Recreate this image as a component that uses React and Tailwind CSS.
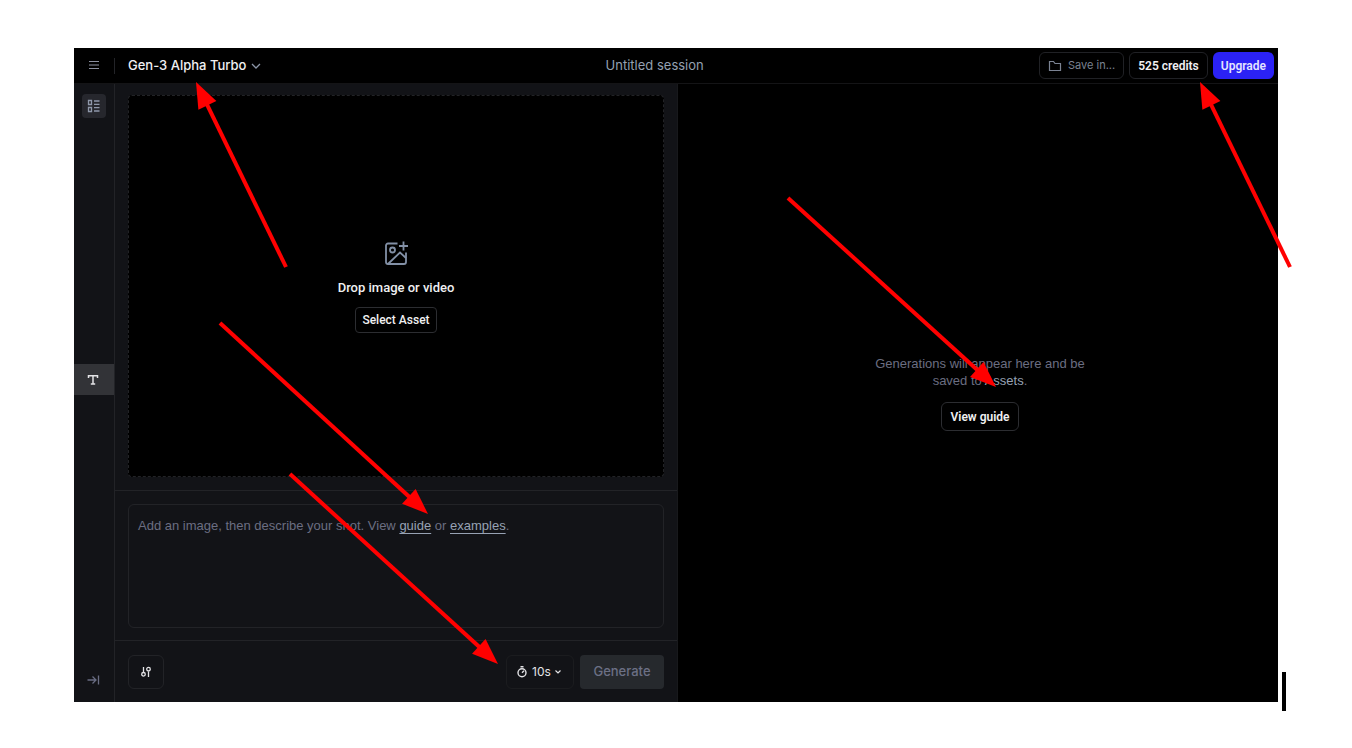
import { useState } from "react";

const arrows = [
  { from: [286, 267], to: [196, 82] },
  { from: [1290, 267], to: [1200, 82] },
  { from: [788, 198], to: [996, 387] },
  { from: [220, 323], to: [428, 514] },
  { from: [290, 474], to: [498, 664] },
];

const Arrow = ({ from, to }) => {
  const dx = to[0] - from[0];
  const dy = to[1] - from[1];
  const length = Math.hypot(dx, dy);
  const angle = (Math.atan2(dy, dx) * 180) / Math.PI;

  return (
    <g transform={`translate(${from[0]} ${from[1]}) rotate(${angle})`}>
      <line x1="0" y1="0" x2={length - 20} y2="0" stroke="#ff0000" strokeWidth="4" />
      <path d={`M${length} 0l-26-10v20z`} fill="#ff0000" />
    </g>
  );
};

const Icon = ({ className, viewBox = "0 0 16 16", strokeWidth = 1, children }) => (
  <svg
    className={className}
    viewBox={viewBox}
    fill="none"
    stroke="currentColor"
    strokeWidth={strokeWidth}
    aria-hidden="true"
  >
    {children}
  </svg>
);

const Header = () => (
  <header className="flex h-9 items-center justify-between border-b border-[#141416] bg-black">
    <div className="flex items-center">
      <button aria-label="Menu" className="flex w-10 justify-center text-[#8b90a0]">
        <Icon className="h-4 w-4" strokeWidth={1.2}>
          <path d="M3 3.500h10M3 7h10M3 10.500h10" />
        </Icon>
      </button>
      <span className="mr-[13px] h-4 w-px bg-[#232428]" />
      <button className="flex items-center gap-1 font-['Inter',sans-serif] text-[13px] font-medium text-[#f0f0f2]">
        Gen-3 Alpha Turbo
        <Icon className="h-3 w-3 text-[#8b95a7]" viewBox="0 0 12 12" strokeWidth={1.3}>
          <path d="M2 4l4 4 4-4" />
        </Icon>
      </button>
    </div>
    <h1 className="pl-2 font-['Inter',sans-serif] text-[13px] text-[#94a0b2]">Untitled session</h1>
    <div className="flex items-center gap-[5px] pr-1">
      <button className="flex h-[27px] items-center gap-1 rounded-md border border-[#202125] px-2 font-['Inter',sans-serif] text-[11px] text-[#7b8393]">
        <Icon className="h-4 w-4" strokeWidth={1.2}>
          <path d="M1.500 3.500h4l1.500 2h5.500v7h-11z" />
        </Icon>
        Save in...
      </button>
      <button className="h-[27px] rounded-md border border-[#202125] px-2 font-['Roboto',sans-serif] text-xs font-semibold text-[#f0f0f2]">
        525 credits
      </button>
      <button className="h-[27px] rounded-md bg-[#2b22f5] px-2 font-['Roboto',sans-serif] text-xs font-semibold text-[#e4e4ff]">
        Upgrade
      </button>
    </div>
  </header>
);

const Sidebar = () => (
  <nav className="flex flex-col items-center justify-between border-r border-[#222327] pt-[10px]">
    <button
      aria-label="Sessions"
      className="flex h-6 w-6 items-center justify-center rounded-sm bg-[#26272d] text-[#8f98aa]"
    >
      <Icon className="h-4 w-4" strokeWidth={1.3}>
        <path d="M2.500 2.500h3v4h-3zM2.500 9.500h3v4h-3zM8 3h5.500M8 6.300h5.500M8 9.700h5.500M8 13h5.500" />
      </Icon>
    </button>
    <button
      aria-label="Text"
      className="flex h-[31px] w-full items-center justify-center bg-[#323337] text-[#e3e3e6]"
    >
      <Icon className="h-4 w-4" strokeWidth={1.5}>
        <path d="M2.500 6V3.700h9V6M7 3.700v8.300M4.800 12h4.400" />
      </Icon>
    </button>
    <button aria-label="Expand panel" className="flex h-[61px] w-full items-end justify-center pb-[14px] text-[#686c82]">
      <Icon className="h-4 w-4" strokeWidth={1.3}>
        <path d="M1.500 8H10M6.500 4.500L10 8l-3.500 3.500M12.500 3.500v9" />
      </Icon>
    </button>
  </nav>
);

const DropZone = () => (
  <div className="flex flex-1 px-[13px] pt-[11px] pb-[13px]">
    <div className="flex flex-1 flex-col items-center justify-center rounded border border-dashed border-[#222326] bg-black">
      <Icon className="h-7 w-7 text-[#8290a6]" viewBox="0 0 28 28" strokeWidth={1.8}>
        <path d="M15.500 4.500H6a2 2 0 0 0-2 2V23a2 2 0 0 0 2 2h16a2 2 0 0 0 2-2V13.500" />
        <circle cx="10.500" cy="11" r="2.500" />
        <path d="M6.500 24.500L18 13.500l6 5.500M21.500 2.500v9M17 7h9" />
      </Icon>
      <p className="mt-[11px] font-['Roboto',sans-serif] text-[13px] font-medium text-[#f0f0f2]">
        Drop image or video
      </p>
      <button className="mt-[10px] h-[26px] rounded-sm border border-[#2c2d31] px-[6px] font-['Roboto',sans-serif] text-xs font-medium text-[#f0f0f2]">
        Select Asset
      </button>
    </div>
  </div>
);

const PromptBox = () => {
  const [prompt, setPrompt] = useState("");

  return (
    <div className="border-t border-[#222327] px-[13px] pt-[13px] pb-3">
      <div className="relative h-[124px]">
        <textarea
          aria-label="Prompt"
          value={prompt}
          onChange={(e) => setPrompt(e.target.value)}
          className="block h-full w-full resize-none rounded-md border border-[#222327] bg-transparent px-[10px] py-3 text-[13px] text-[#e3e3e6] outline-none"
        />
        {!prompt && (
          <p className="pointer-events-none absolute top-3 left-[10px] text-[13px] leading-5 text-[#6b6e82]">
            Add an image, then describe your shot. View{" "}
            <a href="#guide" className="pointer-events-auto text-[#97a2b4] underline underline-offset-3">
              guide
            </a>{" "}
            or{" "}
            <a href="#examples" className="pointer-events-auto text-[#97a2b4] underline underline-offset-3">
              examples
            </a>
            .
          </p>
        )}
      </div>
    </div>
  );
};

const Toolbar = () => (
  <div className="flex h-[62px] items-center gap-[6px] border-t border-[#222327] px-[13px]">
    <button
      aria-label="Settings"
      className="mr-auto flex h-[34px] w-9 items-center justify-center rounded-md border border-[#222327] text-[#e3e3e6]"
    >
      <Icon className="h-4 w-4" strokeWidth={1.3}>
        <path d="M5.500 3v5.500M10.500 7.500V13" />
        <circle cx="5.500" cy="10.300" r="1.800" />
        <circle cx="10.500" cy="5.200" r="1.800" />
      </Icon>
    </button>
    <label className="relative flex h-[34px] w-[68px] items-center rounded-md border border-[#1b1c1f] text-[#e3e3e6]">
      <Icon className="absolute left-[7px] h-4 w-4" strokeWidth={1.4}>
        <circle cx="8" cy="8.700" r="4" />
        <path d="M6.500 2.800h3M8 8.700l2-2" />
      </Icon>
      <select
        aria-label="Duration"
        defaultValue="10s"
        className="h-full w-full appearance-none bg-transparent pl-[25px] font-['Inter',sans-serif] text-xs outline-none"
      >
        <option>5s</option>
        <option>10s</option>
      </select>
      <Icon className="pointer-events-none absolute right-[10px] h-[10px] w-[10px]" viewBox="0 0 10 10" strokeWidth={1.2}>
        <path d="M2.500 3.500L5 6l2.500-2.500" />
      </Icon>
    </label>
    <button className="h-[34px] w-[84px] rounded bg-[#26292d] font-['Inter',sans-serif] text-[13px] font-medium text-[#6c7085]">
      Generate
    </button>
  </div>
);

const Results = () => (
  <section className="flex flex-col items-center justify-center bg-black pl-1">
    <p className="text-center text-[13px] leading-[17px] text-[#6b6e82]">
      Generations will appear here and be
      <br />
      saved to{" "}
      <a href="#assets" className="text-[#97a2b4]">
        Assets
      </a>
      .
    </p>
    <button className="mt-[13px] h-[29px] rounded-md border border-[#2c2d31] px-2 font-['Roboto',sans-serif] text-xs font-semibold text-[#f0f0f2]">
      View guide
    </button>
  </section>
);

const App = () => {
  return (
    <div className="relative flex min-h-screen flex-col overflow-hidden bg-white px-[74px] pt-12 pb-[46px] font-['Liberation_Sans',sans-serif]">
      <Header />
      <main className="grid flex-1 grid-cols-[41px_563fr_600fr] bg-[#121317]">
        <Sidebar />
        <section className="flex flex-col border-r border-[#18191c]">
          <DropZone />
          <PromptBox />
          <Toolbar />
        </section>
        <Results />
      </main>

      {/* annotation layer */}
      <svg className="pointer-events-none absolute top-0 left-0" width="1352" height="748" aria-hidden="true">
        {arrows.map((arrow, index) => (
          <Arrow key={index} from={arrow.from} to={arrow.to} />
        ))}
        <rect x="1282" y="672" width="4" height="39" fill="#000000" />
      </svg>
    </div>
  );
};

export default App;
